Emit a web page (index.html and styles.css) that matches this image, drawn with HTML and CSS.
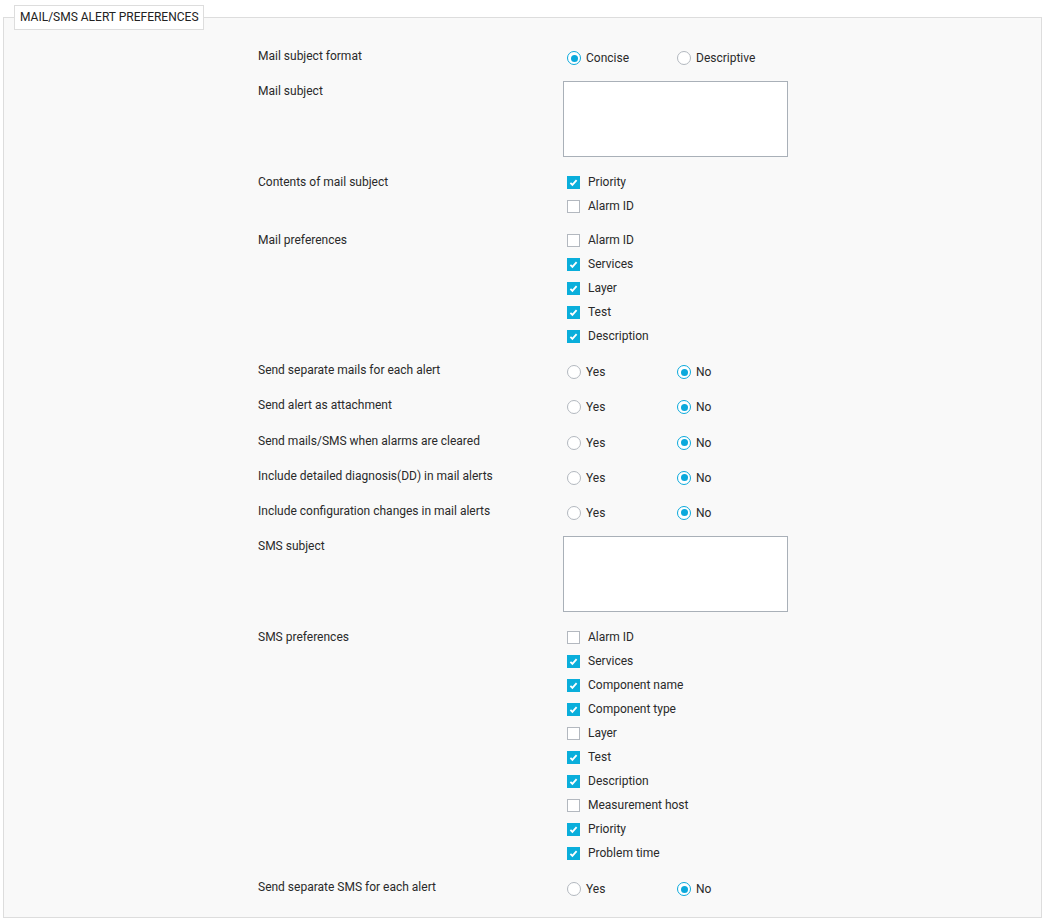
FILE: index.html
```html
<!DOCTYPE html>
<html lang="en">
<head>
<meta charset="utf-8">
<title>Mail/SMS Alert Preferences</title>
<link rel="stylesheet" href="styles.css">
</head>
<body>
<div class="page">
  <fieldset class="prefs">
    <legend class="prefs-title">MAIL/SMS ALERT PREFERENCES</legend>
    <div class="form">

    <div class="row row-radio">
      <div class="label">Mail subject format</div>
      <div class="control radios">
        <label class="opt"><span class="radio on"></span>Concise</label>
        <label class="opt"><span class="radio"></span>Descriptive</label>
      </div>
    </div>

    <div class="row row-text">
      <div class="label">Mail subject</div>
      <div class="control"><textarea class="textbox"></textarea></div>
    </div>

    <div class="row row-checks">
      <div class="label">Contents of mail subject</div>
      <div class="control checks">
        <label class="check-item"><span class="check on"><svg viewBox="0 0 11 11"><path d="M2.4 5.9 L4.4 7.9 L8.6 3.1"/></svg></span>Priority</label>
        <label class="check-item"><span class="check"></span>Alarm ID</label>
      </div>
    </div>

    <div class="row row-checks">
      <div class="label">Mail preferences</div>
      <div class="control checks">
        <label class="check-item"><span class="check"></span>Alarm ID</label>
        <label class="check-item"><span class="check on"><svg viewBox="0 0 11 11"><path d="M2.4 5.9 L4.4 7.9 L8.6 3.1"/></svg></span>Services</label>
        <label class="check-item"><span class="check on"><svg viewBox="0 0 11 11"><path d="M2.4 5.9 L4.4 7.9 L8.6 3.1"/></svg></span>Layer</label>
        <label class="check-item"><span class="check on"><svg viewBox="0 0 11 11"><path d="M2.4 5.9 L4.4 7.9 L8.6 3.1"/></svg></span>Test</label>
        <label class="check-item"><span class="check on"><svg viewBox="0 0 11 11"><path d="M2.4 5.9 L4.4 7.9 L8.6 3.1"/></svg></span>Description</label>
      </div>
    </div>

    <div class="row row-radio">
      <div class="label">Send separate mails for each alert</div>
      <div class="control radios">
        <label class="opt"><span class="radio"></span>Yes</label>
        <label class="opt"><span class="radio on"></span>No</label>
      </div>
    </div>

    <div class="row row-radio">
      <div class="label">Send alert as attachment</div>
      <div class="control radios">
        <label class="opt"><span class="radio"></span>Yes</label>
        <label class="opt"><span class="radio on"></span>No</label>
      </div>
    </div>

    <div class="row row-radio">
      <div class="label">Send mails/SMS when alarms are cleared</div>
      <div class="control radios">
        <label class="opt"><span class="radio"></span>Yes</label>
        <label class="opt"><span class="radio on"></span>No</label>
      </div>
    </div>

    <div class="row row-radio">
      <div class="label">Include detailed diagnosis(DD) in mail alerts</div>
      <div class="control radios">
        <label class="opt"><span class="radio"></span>Yes</label>
        <label class="opt"><span class="radio on"></span>No</label>
      </div>
    </div>

    <div class="row row-radio">
      <div class="label">Include configuration changes in mail alerts</div>
      <div class="control radios">
        <label class="opt"><span class="radio"></span>Yes</label>
        <label class="opt"><span class="radio on"></span>No</label>
      </div>
    </div>

    <div class="row row-text">
      <div class="label">SMS subject</div>
      <div class="control"><textarea class="textbox"></textarea></div>
    </div>

    <div class="row row-checks">
      <div class="label">SMS preferences</div>
      <div class="control checks">
        <label class="check-item"><span class="check"></span>Alarm ID</label>
        <label class="check-item"><span class="check on"><svg viewBox="0 0 11 11"><path d="M2.4 5.9 L4.4 7.9 L8.6 3.1"/></svg></span>Services</label>
        <label class="check-item"><span class="check on"><svg viewBox="0 0 11 11"><path d="M2.4 5.9 L4.4 7.9 L8.6 3.1"/></svg></span>Component name</label>
        <label class="check-item"><span class="check on"><svg viewBox="0 0 11 11"><path d="M2.4 5.9 L4.4 7.9 L8.6 3.1"/></svg></span>Component type</label>
        <label class="check-item"><span class="check"></span>Layer</label>
        <label class="check-item"><span class="check on"><svg viewBox="0 0 11 11"><path d="M2.4 5.9 L4.4 7.9 L8.6 3.1"/></svg></span>Test</label>
        <label class="check-item"><span class="check on"><svg viewBox="0 0 11 11"><path d="M2.4 5.9 L4.4 7.9 L8.6 3.1"/></svg></span>Description</label>
        <label class="check-item"><span class="check"></span>Measurement host</label>
        <label class="check-item"><span class="check on"><svg viewBox="0 0 11 11"><path d="M2.4 5.9 L4.4 7.9 L8.6 3.1"/></svg></span>Priority</label>
        <label class="check-item"><span class="check on"><svg viewBox="0 0 11 11"><path d="M2.4 5.9 L4.4 7.9 L8.6 3.1"/></svg></span>Problem time</label>
      </div>
    </div>

    <div class="row row-radio row-last">
      <div class="label">Send separate SMS for each alert</div>
      <div class="control radios">
        <label class="opt"><span class="radio"></span>Yes</label>
        <label class="opt"><span class="radio on"></span>No</label>
      </div>
    </div>

    </div>
  </fieldset>
</div>
</body>
</html>
```

FILE: styles.css
```css
html, body {
  margin: 0;
  padding: 0;
  background: #ffffff;
}

body {
  font-family: Roboto, "Liberation Sans", Arial, sans-serif;
  font-size: 12px;
  color: #2a2a2a;
}

.page {
  padding: 5px 2px 3px 3px;
}

.prefs {
  margin: 0;
  min-width: 0;
  padding: 0;
  border: 1px solid #dddddd;
  background: #f9f9f9;
}

.prefs-title {
  margin-left: 10px;
  padding: 5px 4px 5px 5px;
  border: 1px solid #dddddd;
  background: #ffffff;
  color: #222222;
  font-size: 12px;
  line-height: 13px;
}

.form {
  padding: 17px 0 17px 254px;
}

.row {
  display: flex;
  align-items: flex-start;
}

.label {
  width: 305px;
  flex: none;
  line-height: 18px;
}

.control {
  flex: none;
}

.row-radio {
  margin-bottom: 13.2px;
}

.row-radio.row-last {
  margin-bottom: 0;
}

.row-text {
  margin-bottom: 16px;
}

.row-checks {
  margin-bottom: 13px;
}

/* radios */
.radios {
  display: flex;
  height: 22px;
  padding-left: 4px;
}

.opt {
  width: 110px;
  display: flex;
  align-items: center;
  gap: 5px;
}

.radio {
  box-sizing: border-box;
  width: 14px;
  height: 14px;
  border: 1px solid #b3b8bf;
  border-radius: 50%;
  background: #ffffff;
  display: flex;
  align-items: center;
  justify-content: center;
}

.radio.on {
  border-color: #0aa9dc;
}

.radio.on::after {
  content: "";
  width: 7px;
  height: 7px;
  border-radius: 50%;
  background: #0aa9dc;
}

/* textarea */
.textbox {
  box-sizing: border-box;
  display: block;
  width: 225px;
  height: 76px;
  margin: -1px 0 0 0;
  border: 1px solid #a9b0b8;
  background: #ffffff;
  resize: none;
  font: inherit;
}

/* checkboxes */
.checks {
  display: flex;
  flex-direction: column;
  margin-top: -3px;
  padding-left: 4px;
}

.check-item {
  height: 24px;
  display: flex;
  align-items: center;
  gap: 8px;
}

.check {
  box-sizing: border-box;
  width: 13px;
  height: 13px;
  border: 1px solid #b3b8bf;
  background: #ffffff;
  display: flex;
}

.check.on {
  border-color: #0aaedb;
  background: #0aaedb;
}

.check svg {
  width: 11px;
  height: 11px;
  fill: none;
  stroke: #ffffff;
  stroke-width: 1.8;
}
```
